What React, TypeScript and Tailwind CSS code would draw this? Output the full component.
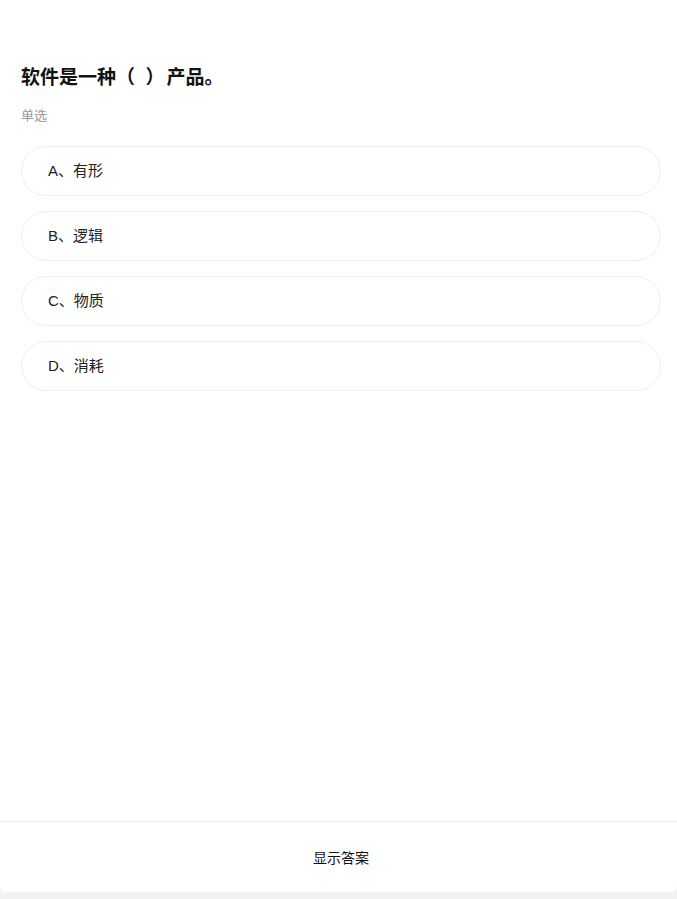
import React from 'react';

const options = ['A、有形', 'B、逻辑', 'C、物质', 'D、消耗'];

export default function App() {
  return (
    <div
      className="h-[899px] flex flex-col bg-[#f2f2f2]"
      style={{ fontFamily: '"Liberation Sans", "Noto Sans CJK SC", sans-serif' }}
    >
      <div className="h-[892px] flex flex-col bg-white rounded-b-[6px]">
        <div className="flex-1 pt-[65px]">
          <h1 className="px-[21px] text-[19px] leading-[26px] font-bold text-[#111] whitespace-pre">
            软件是一种（  ）<span className="ml-[2px]">产品。</span>
          </h1>
          <div className="px-[21px] mt-[17px] text-[13px] leading-[16px] text-[#999]">单选</div>
          <div className="mt-[22px] ml-[21px] mr-[16px] flex flex-col gap-[15px]">
            {options.map((o) => (
              <div
                key={o}
                className="h-[50px] flex items-center pl-[26px] rounded-full border border-[#efefef] text-[15px] text-[#222]"
              >
                {o}
              </div>
            ))}
          </div>
        </div>
        <div className="h-[71px] border-t border-[#efefef] flex items-center justify-center pt-[3px] pl-[5px] text-[14px] text-[#111]">
          显示答案
        </div>
      </div>
    </div>
  );
}
